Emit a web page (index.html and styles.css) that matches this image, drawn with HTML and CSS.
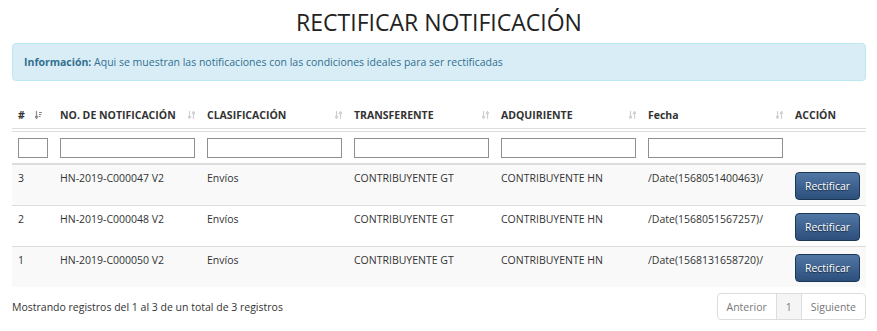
FILE: index.html
```html
<!DOCTYPE html>
<html lang="es">
<head>
    <meta charset="UTF-8">
    <title>Rectificar Notificación</title>
    <link rel="stylesheet" href="styles.css">
</head>
<body>

    <div class="page">
        <h1 class="titulo">RECTIFICAR NOTIFICACIÓN</h1>

        <div class="alerta">
            <strong>Información:</strong> Aqui se muestran las notificaciones con las condiciones ideales para ser rectificadas
        </div>

        <table class="tabla">
            <thead>
                <tr class="cabecera">
                    <th class="col-num"><span class="th-in">#<svg class="sort activo" viewBox="0 0 7 8" width="7" height="8"><path d="M1.5 0v6.5M0 5l1.5 2.5L3 5" /><path d="M4 1.5h3M4 3.5h2.4M4 5.5h1.6" /></svg></span></th>
                    <th><span class="th-in">NO. DE NOTIFICACIÓN<svg class="sort" viewBox="0 0 7 8" width="7" height="8"><path d="M1.5 0v7M0 5l1.5 2.5L3 5M5.5 8V1M4 3l1.5-2.5L7 3" /></svg></span></th>
                    <th><span class="th-in">CLASIFICACIÓN<svg class="sort" viewBox="0 0 7 8" width="7" height="8"><path d="M1.5 0v7M0 5l1.5 2.5L3 5M5.5 8V1M4 3l1.5-2.5L7 3" /></svg></span></th>
                    <th><span class="th-in">TRANSFERENTE<svg class="sort" viewBox="0 0 7 8" width="7" height="8"><path d="M1.5 0v7M0 5l1.5 2.5L3 5M5.5 8V1M4 3l1.5-2.5L7 3" /></svg></span></th>
                    <th><span class="th-in">ADQUIRIENTE<svg class="sort" viewBox="0 0 7 8" width="7" height="8"><path d="M1.5 0v7M0 5l1.5 2.5L3 5M5.5 8V1M4 3l1.5-2.5L7 3" /></svg></span></th>
                    <th><span class="th-in">Fecha<svg class="sort" viewBox="0 0 7 8" width="7" height="8"><path d="M1.5 0v7M0 5l1.5 2.5L3 5M5.5 8V1M4 3l1.5-2.5L7 3" /></svg></span></th>
                    <th class="col-accion">ACCIÓN</th>
                </tr>
                <tr class="filtros">
                    <td><input type="text" class="filtro corto"></td>
                    <td><input type="text" class="filtro"></td>
                    <td><input type="text" class="filtro"></td>
                    <td><input type="text" class="filtro"></td>
                    <td><input type="text" class="filtro"></td>
                    <td><input type="text" class="filtro"></td>
                    <td></td>
                </tr>
            </thead>
            <tbody>
                <tr>
                    <td>3</td>
                    <td>HN-2019-C000047 V2</td>
                    <td>Envíos</td>
                    <td>CONTRIBUYENTE GT</td>
                    <td>CONTRIBUYENTE HN</td>
                    <td>/Date(1568051400463)/</td>
                    <td><button class="btn-rectificar">Rectificar</button></td>
                </tr>
                <tr>
                    <td>2</td>
                    <td>HN-2019-C000048 V2</td>
                    <td>Envíos</td>
                    <td>CONTRIBUYENTE GT</td>
                    <td>CONTRIBUYENTE HN</td>
                    <td>/Date(1568051567257)/</td>
                    <td><button class="btn-rectificar">Rectificar</button></td>
                </tr>
                <tr>
                    <td>1</td>
                    <td>HN-2019-C000050 V2</td>
                    <td>Envíos</td>
                    <td>CONTRIBUYENTE GT</td>
                    <td>CONTRIBUYENTE HN</td>
                    <td>/Date(1568131658720)/</td>
                    <td><button class="btn-rectificar">Rectificar</button></td>
                </tr>
            </tbody>
        </table>

        <div class="pie">
            <div class="info">Mostrando registros del 1 al 3 de un total de 3 registros</div>
            <ul class="paginacion">
                <li>Anterior</li>
                <li class="actual">1</li>
                <li>Siguiente</li>
            </ul>
        </div>
    </div>

</body>
</html>
```

FILE: styles.css
```css
body {
    font-family: "Open Sans", Arial, sans-serif;
    font-size: 10.5px;
    line-height: 16px;
    color: #333;
    background: #fff;
    margin: 0;
}

.page {
    margin: 0 11px 0 12px;
}

.titulo {
    font-size: 23px;
    font-weight: 400;
    line-height: 30px;
    text-align: center;
    margin: 0;
    padding-top: 7px;
    color: #222;
}

.alerta {
    margin-top: 6px;
    background-color: #d9edf7;
    border: 1px solid #bce8f1;
    border-radius: 4px;
    color: #31708f;
    padding: 10px 11px;
}

.tabla {
    width: 100%;
    border-collapse: separate;
    border-spacing: 0;
    margin-top: 19px;
    table-layout: fixed;
}

.tabla th {
    text-align: left;
    font-weight: 700;
    padding: 7px 6px 5px;
    border-bottom: 1px solid #ddd;
    width: 135px;
}

.tabla th.col-num {
    width: 30px;
}

.tabla th.col-accion {
    width: auto;
}

.th-in {
    display: flex;
    justify-content: space-between;
    align-items: center;
}

.sort {
    fill: none;
    stroke: #d0d0d0;
    stroke-width: 1.2;
    flex: none;
}

.sort.activo {
    stroke: #8a8a8a;
    margin-right: 6px;
}

.filtros td {
    border-top: 2px solid #fff;
    box-shadow: inset 0 1px 0 #ddd;
    border-bottom: 2px solid #ddd;
    padding: 7px 6px 5px;
}

.filtro {
    display: block;
    box-sizing: border-box;
    width: 135px;
    height: 20px;
    margin: 0;
    border: 1px solid #8f8f8f;
    background: #fff;
    font: inherit;
}

.filtro.corto {
    width: 30px;
}

.tabla tbody td {
    vertical-align: top;
    padding: 5px 6px 5px;
    border-bottom: 1px solid #ddd;
}

.tabla tbody tr:nth-child(odd) td {
    background-color: #f9f9f9;
}

.tabla tbody tr:last-child td {
    border-bottom: none;
}

.btn-rectificar {
    display: block;
    margin-top: 2px;
    height: 28px;
    width: 65px;
    padding: 0;
    font-family: "Open Sans", Arial, sans-serif;
    font-size: 10.5px;
    color: #fff;
    text-shadow: 0 1px 1px rgba(0, 0, 0, 0.6);
    background: linear-gradient(#5177a5, #2c4f7c);
    border: 1px solid #1d3757;
    border-radius: 4px;
    cursor: pointer;
}

.pie {
    display: flex;
    justify-content: space-between;
    align-items: flex-start;
    margin-top: 6px;
}

.info {
    padding-top: 6px;
}

.paginacion {
    display: flex;
    list-style: none;
    margin: 0;
    padding: 0;
    border: 1px solid #ddd;
    border-radius: 4px;
    color: #777;
}

.paginacion li {
    padding: 5px 9px 4px;
    border-left: 1px solid #ddd;
}

.paginacion li:first-child {
    border-left: none;
}

.paginacion li.actual {
    background-color: #f5f5f5;
}
```
